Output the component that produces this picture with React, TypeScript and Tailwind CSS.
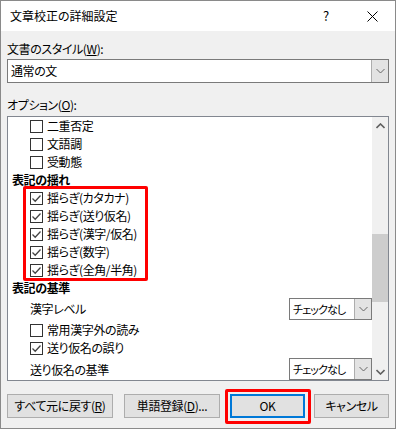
import React from "react";

const FONT = '"Noto Sans CJK JP", "Noto Sans", sans-serif';

function Check({ checked }: { checked: boolean }) {
  return (
    <div className="w-[13px] h-[13px] border border-[#333] bg-white flex items-center justify-center shrink-0">
      {checked && (
        <svg width="11" height="11" viewBox="0 0 11 11">
          <path d="M1.5 5.5 L4.2 8.2 L9.5 2.5" fill="none" stroke="#444" strokeWidth="1.3" />
        </svg>
      )}
    </div>
  );
}

function Chevron({ color = "#555", w = 9 }: { color?: string; w?: number }) {
  return (
    <svg width={w} height="6" viewBox="0 0 9 6">
      <path d="M0.5 1 L4.5 5 L8.5 1" fill="none" stroke={color} strokeWidth="1" />
    </svg>
  );
}

function CheckRow({ label, checked }: { label: string; checked: boolean }) {
  return (
    <div className="h-[18px] flex items-center pl-[22px] gap-[4px] shrink-0">
      <Check checked={checked} />
      <span className="whitespace-nowrap">{label}</span>
    </div>
  );
}

function Header({ label }: { label: string }) {
  return (
    <div className="h-[18px] flex items-center pl-[4px] font-bold shrink-0">
      <span>{label}</span>
    </div>
  );
}

function SmallCombo() {
  return (
    <div className="w-[83px] h-[22px] border border-[#7a7a7a] bg-white flex shrink-0">
      <div className="flex-1 flex items-center pl-[3px] text-[11px] tracking-[-0.9px] whitespace-nowrap overflow-hidden">チェックなし</div>
      <div className="w-[17px] bg-[#e3e3e3] border-l border-[#adadad] flex items-center justify-center">
        <Chevron color="#666" w={9} />
      </div>
    </div>
  );
}

export default function App() {
  return (
    <div
      className="w-[396px] h-[429px] border border-[#8a8a8a] bg-[#f0f0f0] flex flex-col text-[12px] text-black overflow-hidden [font-feature-settings:'palt']"
      style={{ fontFamily: FONT }}
    >
      {/* Title bar */}
      <div className="h-[30px] bg-white flex items-center shrink-0">
        <span className="pl-[9px] text-[12px] flex-1">文章校正の詳細設定</span>
        <span className="w-[46px] text-center text-[13px]">?</span>
        <div className="w-[46px] flex items-center justify-center">
          <svg width="11" height="11" viewBox="0 0 11 11">
            <path d="M0.5 0.5 L10.5 10.5 M10.5 0.5 L0.5 10.5" stroke="#000" strokeWidth="1" />
          </svg>
        </div>
      </div>

      <div className="px-[6px] flex flex-col tracking-[-0.4px]">
        <div className="mt-[10px] h-[16px] leading-[16px]">
          文書のスタイル(<span className="underline">W</span>):
        </div>
        <div className="mt-[2px] h-[24px] border border-[#7a7a7a] bg-white flex">
          <div className="flex-1 flex items-center pl-[3px]">通常の文</div>
          <div className="w-[17px] bg-[#e3e3e3] border-l border-[#adadad] flex items-center justify-center">
            <Chevron color="#666" />
          </div>
        </div>

        <div className="mt-[14px] h-[16px] leading-[16px]">
          オプション(<span className="underline">O</span>):
        </div>

        <div className="relative mt-[3px] h-[265px] border border-[#828790] bg-white flex">
          <div className="flex-1 overflow-hidden flex flex-col">
            <CheckRow label="二重否定" checked={false} />
            <CheckRow label="文語調" checked={false} />
            <CheckRow label="受動態" checked={false} />
            <Header label="表記の揺れ" />
            <CheckRow label="揺らぎ(カタカナ)" checked={true} />
            <CheckRow label="揺らぎ(送り仮名)" checked={true} />
            <CheckRow label="揺らぎ(漢字/仮名)" checked={true} />
            <CheckRow label="揺らぎ(数字)" checked={true} />
            <CheckRow label="揺らぎ(全角/半角)" checked={true} />
            <Header label="表記の基準" />
            <div className="h-[24px] flex items-center justify-between pl-[22px] shrink-0">
              <span>漢字レベル</span>
              <SmallCombo />
            </div>
            <CheckRow label="常用漢字外の読み" checked={false} />
            <CheckRow label="送り仮名の誤り" checked={true} />
            <div className="h-[24px] flex items-start pt-[1px] justify-between pl-[22px] shrink-0">
              <span className="mt-[3px]">送り仮名の基準</span>
              <SmallCombo />
            </div>
          </div>
          {/* Scrollbar */}
          <div className="w-[16px] bg-[#f0f0f0] flex flex-col items-center shrink-0">
            <div className="h-[17px] flex items-center justify-center">
              <svg width="9" height="6" viewBox="0 0 9 6">
                <path d="M0.5 5 L4.5 1 L8.5 5" fill="none" stroke="#606060" strokeWidth="1.6" />
              </svg>
            </div>
            <div className="h-[100px]" />
            <div className="w-[16px] h-[68px] bg-[#cdcdcd]" />
            <div className="flex-1" />
            <div className="h-[17px] flex items-center justify-center">
              <svg width="9" height="6" viewBox="0 0 9 6">
                <path d="M0.5 1 L4.5 5 L8.5 1" fill="none" stroke="#606060" strokeWidth="1.6" />
              </svg>
            </div>
          </div>
          {/* Red highlight */}
          <div className="absolute left-[15px] top-[69px] w-[125px] h-[95px] border-[3px] border-[#ff0000] rounded-[2px] pointer-events-none" />
        </div>

        {/* Buttons */}
        <div className="mt-[13px] flex items-center">
          <div className="w-[106px] h-[24px] bg-[#e1e1e1] border border-[#adadad] flex items-center justify-center whitespace-nowrap">
            すべて元に戻す(<span className="underline">R</span>)
          </div>
          <div className="ml-[11px] w-[96px] h-[24px] bg-[#e1e1e1] border border-[#adadad] flex items-center justify-center whitespace-nowrap">
            単語登録(<span className="underline">D</span>)...
          </div>
          <div className="relative ml-[10px] w-[75px] h-[24px] bg-[#e1e1e1] border-2 border-[#0078d7] flex items-center justify-center">
            OK
            <div className="absolute left-[-7px] top-[-7px] w-[86px] h-[35px] border-[3px] border-[#ff0000] rounded-[2px] pointer-events-none" />
          </div>
          <div className="ml-[9px] w-[75px] h-[24px] bg-[#e1e1e1] border border-[#adadad] flex items-center justify-center">
            キャンセル
          </div>
        </div>
      </div>
    </div>
  );
}
